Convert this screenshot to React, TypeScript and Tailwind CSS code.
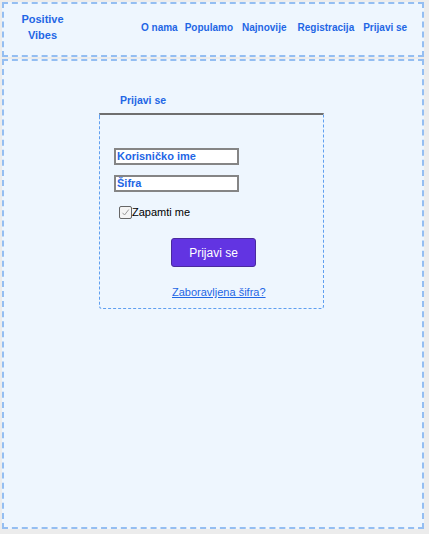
import React from "react";

const font = { fontFamily: '"Liberation Sans", Arial, sans-serif' };

export default function App() {
  return (
    <div className="min-h-[534px] w-[429px] bg-[#ececec] pt-[2px] pl-[2px]" style={font}>
      <div className="flex h-[55px] w-[422px] items-start border-2 border-dashed border-[#94bef2] bg-[#eef6fe]">
        <div className="mt-[7px] w-[77px] text-center text-[11px] font-bold leading-[16px] text-[#1f66e5]">
          Positive
          <br />
          Vibes
        </div>
        <nav className="ml-[60px] mt-[17px] flex text-[10px] font-bold leading-[14px] text-[#1f66e5]">
          <span>O nama</span>
          <span className="ml-[7px]">Populamo</span>
          <span className="ml-[9px]">Najnovije</span>
          <span className="ml-[11px]">Registracija</span>
          <span className="ml-[9px]">Prijavi se</span>
        </nav>
      </div>
      <div className="mt-[2px] h-[470px] w-[422px] border-2 border-dashed border-[#94bef2] bg-[#eef6fe]">
        <div className="ml-[116px] mt-[32px] text-[10.5px] font-bold leading-[14px] text-[#1f66e5]">
          Prijavi se
        </div>
        <div className="ml-[95px] mt-[6px] h-[196px] w-[225px] rounded-b-[3px] border border-t-2 border-dashed border-[#5f9ff0] border-t-[#6f6f6f] [border-top-style:solid]">
          <div className="ml-[14px] mt-[33px] flex h-[17px] w-[125px] items-center border-2 border-[#858585] bg-white px-[1px] text-[11px] font-bold text-[#1f66e5]">
            Korisničko ime
          </div>
          <div className="ml-[14px] mt-[10px] flex h-[17px] w-[125px] items-center border-2 border-[#858585] bg-white px-[1px] text-[11px] font-bold text-[#1f66e5]">
            Šifra
          </div>
          <div className="ml-[19px] mt-[13px] flex items-center">
            <span className="flex h-[13px] w-[13px] items-center justify-center rounded-[2px] border border-[#666] bg-[#f4f4f4]">
              <svg width="9" height="9" viewBox="0 0 9 9">
                <path d="M1.5 4.8 L3.5 7 L7.8 1.5" fill="none" stroke="#9a9a9a" strokeWidth="1" />
              </svg>
            </span>
            <span className="text-[11px] leading-[14px] text-black">Zapamti me</span>
          </div>
          <div className="ml-[71px] mt-[19px] flex h-[29px] w-[85px] items-center justify-center rounded-[3px] border border-[#4a2a9e] bg-[#6234e2] text-[12px] text-white">
            Prijavi se
          </div>
          <div className="ml-[72px] mt-[18px] whitespace-nowrap text-[11px] leading-[14px] text-[#1f66e5] underline">
            Zaboravljena šifra?
          </div>
        </div>
      </div>
    </div>
  );
}
